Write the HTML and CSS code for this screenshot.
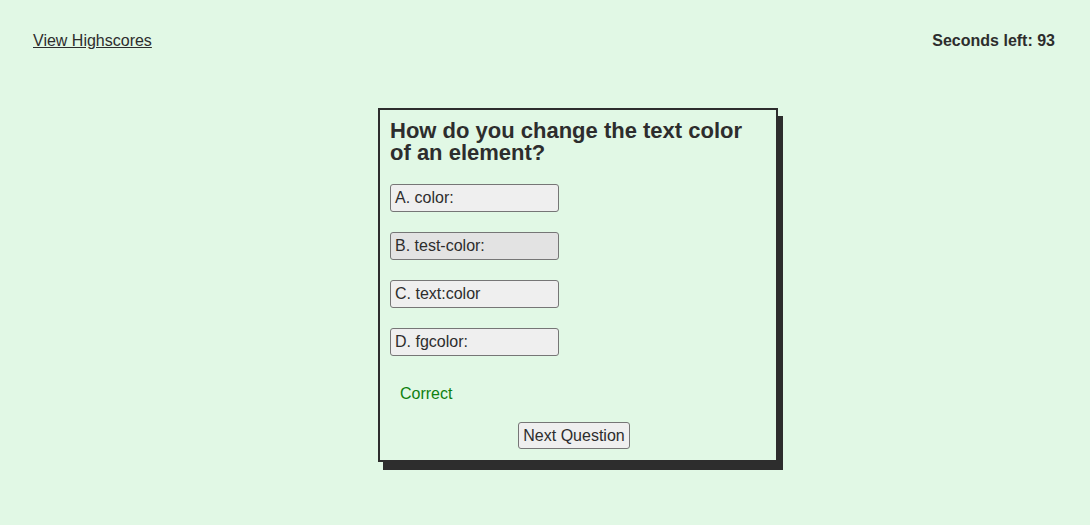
FILE: index.html
```html
<!DOCTYPE html>
<html lang="en">
<head>
<meta charset="utf-8">
<title>Code Quiz</title>
<link rel="stylesheet" href="styles.css">
</head>
<body>
  <header class="top-bar">
    <a class="highscores-link" href="#">View Highscores</a>
    <div class="timer">Seconds left: 93</div>
  </header>
  <main class="quiz">
    <section class="quiz-card">
      <h2 class="question">How do you change the text color of an element?</h2>
      <div class="choices">
        <button class="choice">A. color:</button>
        <button class="choice choice-hover">B. test-color:</button>
        <button class="choice">C. text:color</button>
        <button class="choice">D. fgcolor:</button>
      </div>
      <p class="feedback">Correct</p>
      <div class="next-row">
        <button class="next-btn">Next Question</button>
      </div>
    </section>
  </main>
</body>
</html>
```

FILE: styles.css
```css
html, body {
  margin: 0;
  padding: 0;
}

body {
  background: #e1f8e5;
  color: #2d2d2d;
  font-family: "Liberation Sans", Arial, Helvetica, sans-serif;
  font-size: 16px;
  min-height: 525px;
}

.top-bar {
  display: flex;
  justify-content: space-between;
  align-items: center;
  padding: 32px 35px 0 33px;
  line-height: 18px;
}

.highscores-link {
  color: #2d2d2d;
  text-decoration: underline;
}

.timer {
  font-weight: bold;
}

.quiz {
  display: flex;
  justify-content: center;
  padding-top: 58px;
  padding-left: 66px;
}

.quiz-card {
  width: 376px;
  border: 2px solid #2d2d2d;
  box-shadow: 5px 8px 0 #2d2d2d;
  padding: 10px 10px 11px 10px;
  display: flex;
  flex-direction: column;
}

.question {
  margin: 0;
  font-size: 22px;
  line-height: 22px;
  font-weight: bold;
  color: #2d2d2d;
}

.choices {
  display: flex;
  flex-direction: column;
  align-items: flex-start;
  gap: 20px;
  margin-top: 20px;
}

.choice {
  width: 169px;
  height: 28px;
  text-align: left;
  font-family: "Liberation Sans", Arial, Helvetica, sans-serif;
  font-size: 16px;
  color: #2d2d2d;
  background: #efefef;
  border: 1px solid #767676;
  border-radius: 3px;
  padding: 0 4px;
  cursor: pointer;
}

.choice-hover {
  background: #e3e3e3;
}

.feedback {
  margin: 28px 0 0 10px;
  color: #0f800f;
  line-height: 20px;
}

.next-row {
  display: flex;
  justify-content: center;
  margin-top: 18px;
  padding-right: 8px;
}

.next-btn {
  height: 27px;
  font-family: "Liberation Sans", Arial, Helvetica, sans-serif;
  font-size: 16px;
  color: #2d2d2d;
  background: #efefef;
  border: 1px solid #767676;
  border-radius: 3px;
  padding: 0 4px;
}
```
